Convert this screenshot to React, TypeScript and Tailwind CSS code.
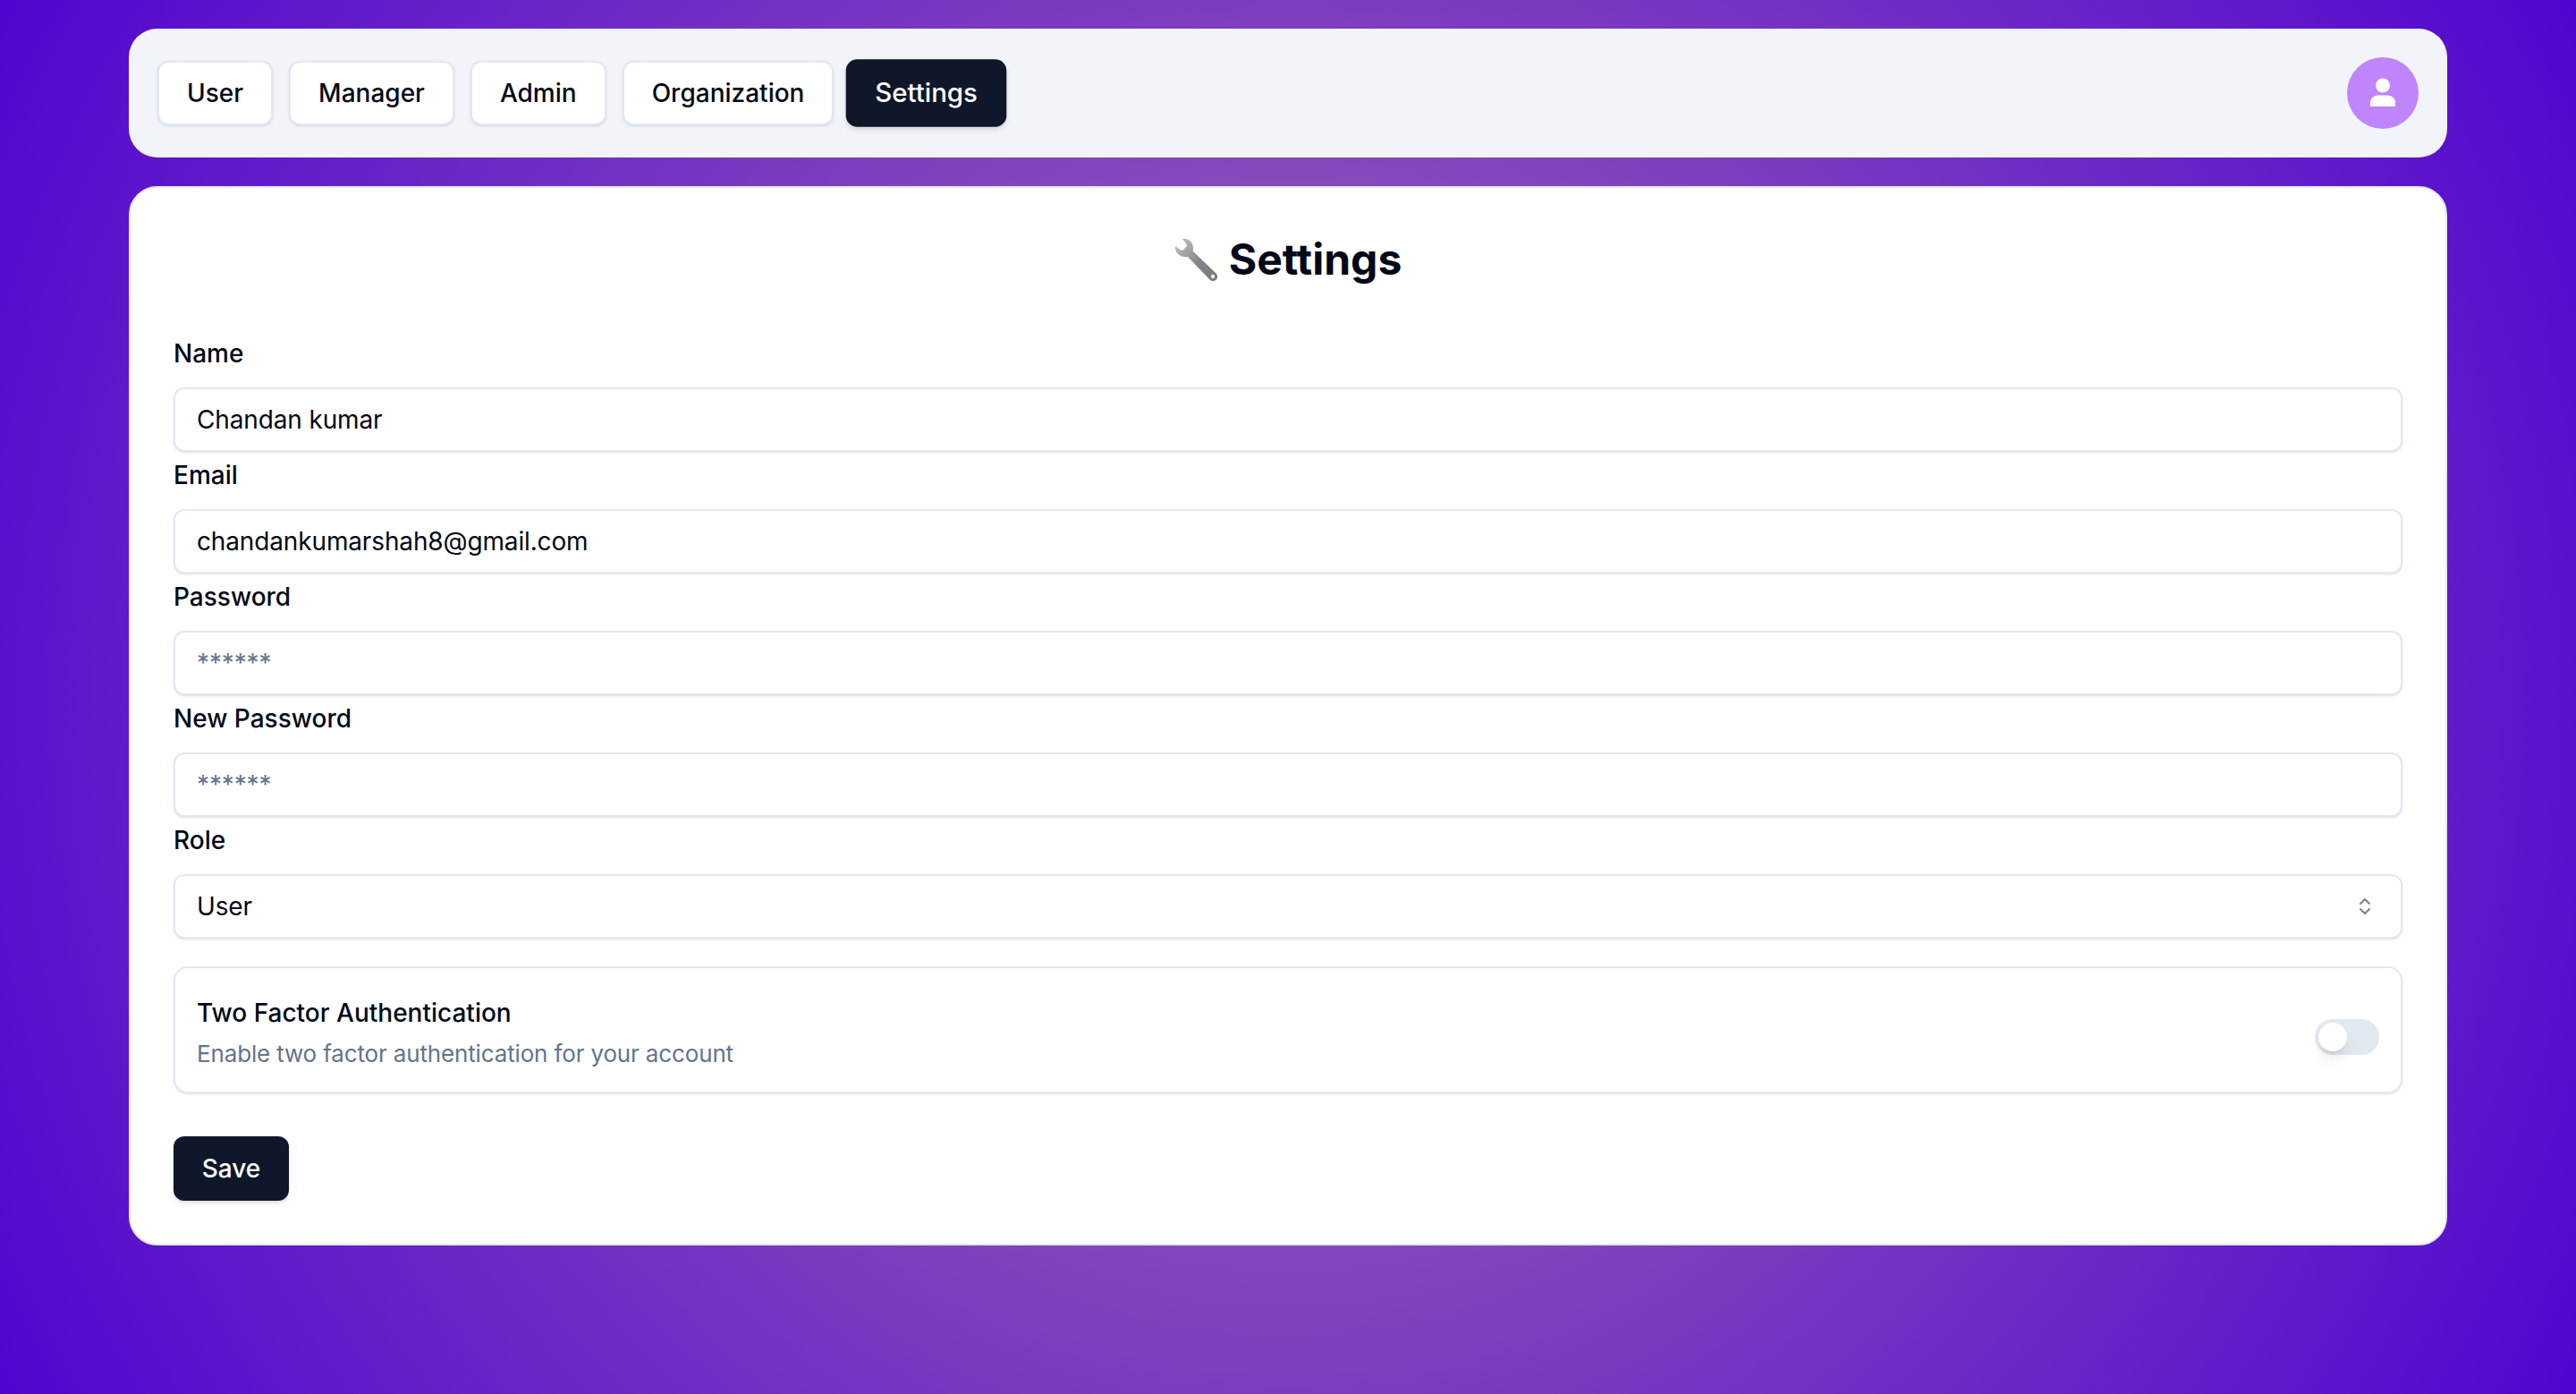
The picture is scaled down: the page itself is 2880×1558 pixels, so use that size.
import { ChevronsUpDown } from "lucide-react";

const tabs = ["User", "Manager", "Admin", "Organization", "Settings"];
const inputClass =
  "block w-full h-[72px] px-6 rounded-xl border-2 border-[#e2e8f0] bg-white text-[28px] tracking-[-0.14px] text-[#020817] placeholder:text-[#64748b] shadow-sm outline-none";

const WrenchIcon = () => (
  <svg width="48" height="48" viewBox="0 0 48 48" className="shrink-0">
    <defs>
      <linearGradient id="wrench" x1="0" y1="0" x2="1" y2="1">
        <stop offset="0" stopColor="#c4c4c8" />
        <stop offset="0.55" stopColor="#85858b" />
        <stop offset="1" stopColor="#77777d" />
      </linearGradient>
    </defs>
    <path
      d="M9 1 C14 0 19 3 20.5 8 C21.3 11 21 13 20.5 14.5 L46.5 39.5 C48.5 41.5 48.5 45 46.5 46.8 C44.5 48.6 41.5 48.5 39.5 46.5 L15 21 C12 21.5 8.5 21 5.5 19 C2 16.5 0.5 13 1 9 L7 13.5 C8 14 9 14 10 13 L13 10 C14 9 14 8 13.5 7 Z"
      fill="url(#wrench)"
    />
    <circle cx="43" cy="43" r="2.2" fill="#f2f2f4" />
  </svg>
);

const Field = ({ label, children }: { label: string; children: React.ReactNode }) => (
  <div>
    <label className="block h-[64px] pt-[6px] text-[28px] leading-[40px] font-medium text-[#020817]">{label}</label>
    {children}
  </div>
);

export default function App() {
  return (
    <div className="min-h-[1558px] bg-[radial-gradient(circle,#a56eb0,#4f05d0)] pt-8 font-['Inter',sans-serif]">
      <nav className="mx-auto flex h-[144px] w-[2592px] items-center justify-between rounded-[32px] bg-[#f1f5f9] pl-[32px] pr-8">
        <div className="flex gap-[18px]">
          {tabs.map((tab) => (
            <button
              key={tab}
              className={
                tab === "Settings"
                  ? "h-[72px] scale-105 rounded-xl border-2 border-[#0f172a] bg-[#0f172a] px-[29px] text-[28px] font-medium text-white shadow-md"
                  : "h-[72px] rounded-xl border-2 border-[#e2e8f0] bg-white px-[31px] text-[28px] font-medium text-[#020817] shadow-sm"
              }
            >
              {tab}
            </button>
          ))}
        </div>
        <div className="flex h-20 w-20 items-center justify-center rounded-full bg-[#c084fc]">
          <svg width="30" height="34" viewBox="0 0 30 34" fill="white">
            <circle cx="15" cy="8.5" r="8" />
            <path d="M1 32 V28 C1 23 5 19.5 10 19.5 H20 C25 19.5 29 23 29 28 V32 Z" />
          </svg>
        </div>
      </nav>

      <main className="mx-auto mt-8 w-[2592px] rounded-[32px] border-2 border-[#e2e8f0] bg-white px-12 pt-[40px] pb-12">
        <h1 className="flex items-center justify-center gap-[13px] text-[48px] leading-[80px] font-bold text-[#020817]">
          <WrenchIcon />
          Settings
        </h1>
        <div className="mt-[39px]">
          <Field label="Name">
            <input className={inputClass} defaultValue="Chandan kumar" />
          </Field>
          <Field label="Email">
            <input className={inputClass} defaultValue="chandankumarshah8@gmail.com" />
          </Field>
          <Field label="Password">
            <input className={inputClass} placeholder="******" />
          </Field>
          <Field label="New Password">
            <input className={inputClass} placeholder="******" />
          </Field>
          <Field label="Role">
            <div className={`${inputClass} flex items-center justify-between pr-[28px]`}>
              <span>User</span>
              <ChevronsUpDown size={24} strokeWidth={2} className="text-[#020817] opacity-50" />
            </div>
          </Field>
        </div>
        <div className="mt-[31px] flex h-[142px] items-center justify-between rounded-2xl border-2 border-[#e2e8f0] px-6 pt-[8px] shadow-sm">
          <div>
            <p className="text-[28px] leading-[40px] font-medium text-[#020817]">Two Factor Authentication</p>
            <p className="mt-[6px] text-[26px] leading-[40px] tracking-[-0.15px] text-[#64748b]">Enable two factor authentication for your account</p>
          </div>
          <div className="mt-[8px] flex h-10 w-[72px] items-center rounded-full bg-[#e2e8f0] pl-1">
            <div className="h-8 w-8 rounded-full bg-white shadow-lg" />
          </div>
        </div>
        <button className="mt-12 block h-[72px] w-[129px] rounded-xl bg-[#0f172a] text-[28px] font-medium text-white shadow-md">
          Save
        </button>
      </main>
    </div>
  );
}
